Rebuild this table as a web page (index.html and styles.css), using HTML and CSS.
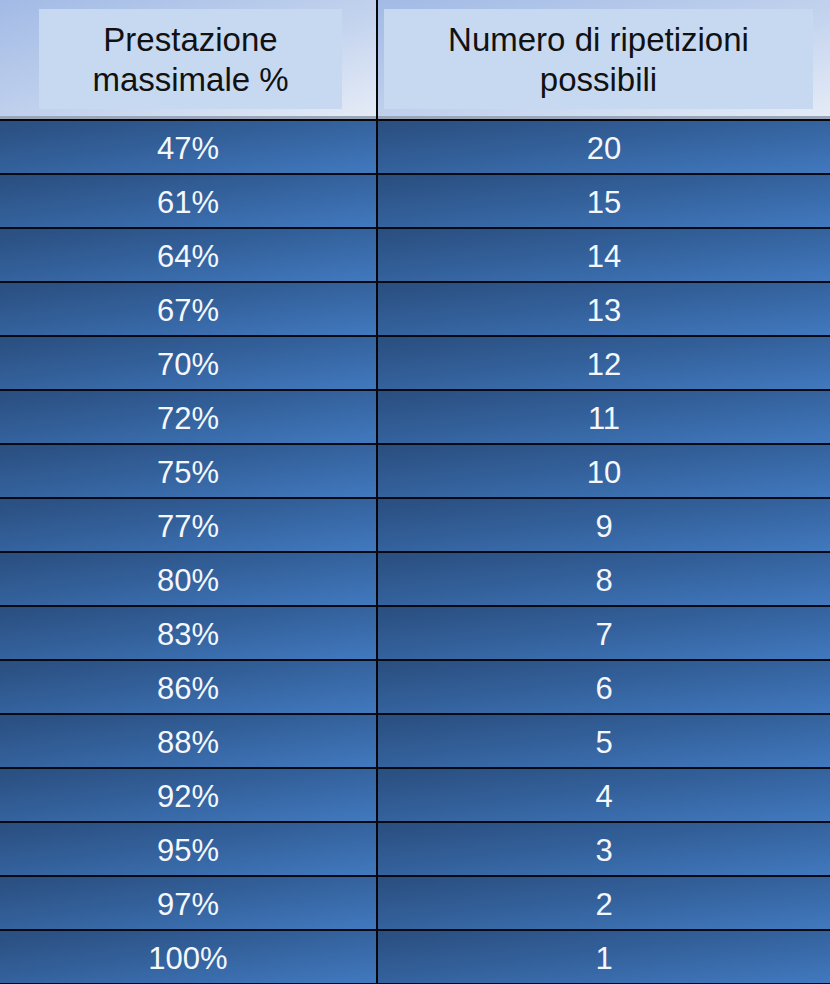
FILE: index.html
```html
<!DOCTYPE html>
<html lang="it">
<head>
<meta charset="utf-8">
<title>Prestazione massimale</title>
<link rel="stylesheet" href="styles.css">
</head>
<body>
<div class="table">
  <div class="head left"><div class="box box-left">Prestazione<br>massimale %</div></div>
  <div class="head right"><div class="box box-right">Numero di ripetizioni<br>possibili</div></div>
  <div class="cell left">47%</div><div class="cell right">20</div>
  <div class="cell left">61%</div><div class="cell right">15</div>
  <div class="cell left">64%</div><div class="cell right">14</div>
  <div class="cell left">67%</div><div class="cell right">13</div>
  <div class="cell left">70%</div><div class="cell right">12</div>
  <div class="cell left">72%</div><div class="cell right">11</div>
  <div class="cell left">75%</div><div class="cell right">10</div>
  <div class="cell left">77%</div><div class="cell right">9</div>
  <div class="cell left">80%</div><div class="cell right">8</div>
  <div class="cell left">83%</div><div class="cell right">7</div>
  <div class="cell left">86%</div><div class="cell right">6</div>
  <div class="cell left">88%</div><div class="cell right">5</div>
  <div class="cell left">92%</div><div class="cell right">4</div>
  <div class="cell left">95%</div><div class="cell right">3</div>
  <div class="cell left">97%</div><div class="cell right">2</div>
  <div class="cell left">100%</div><div class="cell right">1</div>
</div>
</body>
</html>
```
FILE: styles.css
```css
html, body {
  margin: 0;
  padding: 0;
  background: #0b0f18;
}
body {
  width: 830px;
  height: 984px;
  overflow: hidden;
  font-family: "Liberation Sans", Arial, sans-serif;
}
.table {
  display: grid;
  grid-template-columns: 378px 452px;
}
.left {
  border-right: 2px solid #05070c;
}
.head {
  height: 121px;
  box-sizing: border-box;
  padding-top: 9px;
  background: linear-gradient(to bottom right, #a2bae5 0%, #c3d3ee 55%, #e6ecf7 100%);
  box-shadow: inset 0 -3px 0 #9aa6b8;
  border-bottom: 2px solid #05070c;
}
.head.right {
  border-right: none;
}
.box {
  height: 100px;
  box-sizing: border-box;
  background: #c7d9f1;
  color: #111;
  font-size: 33px;
  line-height: 40px;
  text-align: center;
  padding-top: 11px;
}
.box-left {
  margin: 0 34px 0 39px;
}
.box-right {
  margin: 0 17px 0 6px;
}
.cell {
  height: 52px;
  box-sizing: content-box;
  padding-top: 0;
  border-bottom: 2px solid #070a12;
  background: linear-gradient(to bottom right, #2a4e7f 0%, #33609a 45%, #4179bf 100%);
  color: #f4f7fc;
  font-size: 31px;
  line-height: 55px;
  overflow: hidden;
  text-align: center;
}
```
